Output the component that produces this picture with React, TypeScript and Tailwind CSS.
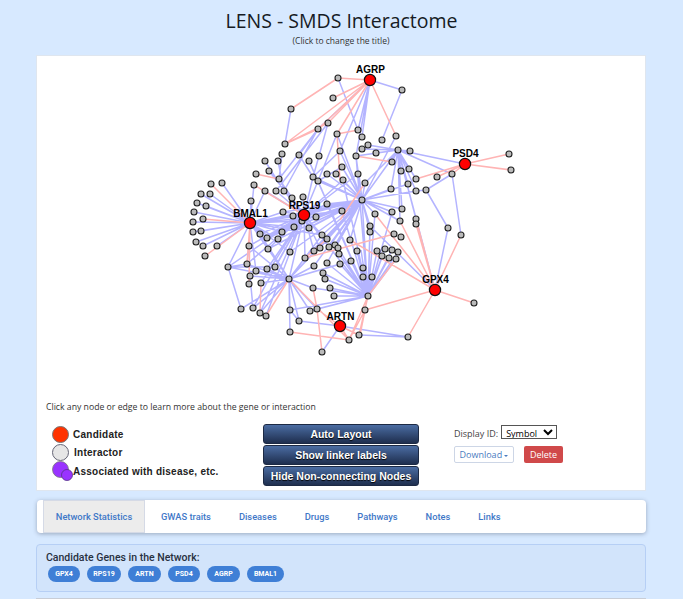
import React from 'react';

type P = [number, number];

const NODES: P[] = [
  [338,78],[333,98],[291,109],[318,129],[328,123],[337,134],[358,130],[285,144],[282,154],[340,151],[299,155],[319,156],[309,161],[356,156],
  [265,161],[278,161],[269,171],[342,167],[256,174],[327,174],[336,174],[358,174],[279,179],[313,177],[318,181],[343,180],[211,184],[222,183],
  [254,185],[201,194],[210,194],[265,191],[276,191],[284,191],[303,197],[292,198],[251,201],[197,203],[206,206],[327,204],[362,200],[194,212],
  [342,211],[283,212],[293,216],[316,217],[193,222],[203,219],[302,221],[402,90],[362,137],[396,136],[382,140],[368,145],[362,149],[398,150],
  [410,151],[376,153],[392,162],[509,154],[511,170],[401,171],[409,169],[437,177],[452,174],[416,179],[365,183],[408,184],[391,189],[416,191],
  [426,190],[392,212],[402,209],[375,214],[400,221],[416,219],[416,224],[193,232],[201,231],[196,242],[203,246],[217,246],[205,256],[260,234],
  [267,238],[282,232],[294,227],[309,228],[278,239],[322,235],[327,239],[350,240],[249,246],[268,249],[290,252],[314,251],[320,248],[329,247],
  [335,245],[338,248],[339,254],[357,251],[305,258],[247,264],[228,267],[267,269],[275,267],[256,271],[250,276],[314,266],[327,263],[340,264],
  [351,261],[323,273],[325,279],[249,284],[261,283],[289,279],[313,288],[330,288],[334,296],[241,309],[253,308],[260,313],[266,316],[290,310],
  [310,311],[317,309],[299,321],[290,332],[349,340],[359,335],[322,352],[370,226],[370,232],[394,234],[401,237],[448,228],[461,235],[377,251],
  [385,249],[392,250],[398,252],[382,256],[389,258],[396,259],[363,268],[363,277],[372,277],[368,296],[474,303],[365,310],[408,337],
];

const GENES: { label: string; at: P; ly: number }[] = [
  { label: 'AGRP', at: [370, 80], ly: 73 },
  { label: 'PSD4', at: [465, 164], ly: 157 },
  { label: 'RPS19', at: [304, 215], ly: 209 },
  { label: 'BMAL1', at: [250, 223], ly: 217 },
  { label: 'GPX4', at: [435, 290], ly: 283 },
  { label: 'ARTN', at: [340, 326], ly: 320 },
];

function fan(hub: P, targets: P[]) {
  return targets.map((t) => `M${hub[0]} ${hub[1]}L${t[0]} ${t[1]}`).join('');
}

const BMAL1: P = [250, 223];
const RPS19: P = [304, 215];
const AGRP: P = [370, 80];
const PSD4: P = [465, 164];
const GPX4: P = [435, 290];
const ARTN: P = [340, 326];

const BLUE = [
  fan([362,200], [[313,177],[318,181],[327,174],[336,174],[342,167],[343,180],[359,174],[356,156],[365,183],[391,189],[408,184],[416,191],[392,212],[402,209],[375,214],[400,221],[370,226],[370,232],[304,215],[250,223],[283,212],[293,216],[316,217],[302,221],[294,227],[309,228],[322,235],[327,239],[350,240],[329,247],[335,245],[305,258],[282,232],[267,238],[278,239],[314,251],[320,248],[289,279],[268,249],[290,252],[327,204],[342,211],[327,263],[314,266],[368,296],[398,150],[396,136],[337,134],[340,151]]),
  fan([398,150], [[356,156],[376,153],[392,162],[401,171],[409,169],[416,179],[408,184],[416,191],[391,189],[465,164],[400,221],[416,219],[365,183],[410,151],[402,209],[368,145],[362,149],[435,290]]),
  fan(AGRP, [[358,130],[402,90],[362,137],[318,129],[340,151],[356,156]]),
  fan([368,296], [[361,250],[370,232],[370,226],[363,268],[363,277],[372,277],[377,251],[385,249],[392,250],[398,252],[382,256],[389,258],[396,259],[351,261],[340,264],[330,288],[334,296],[327,263],[325,279],[323,273],[318,181],[309,161],[356,156],[338,248],[339,254],[357,251],[343,180],[327,204],[304,215],[375,214],[392,212],[342,211],[317,309],[310,311],[290,310],[313,288]]),
  fan([289,279], [[228,267],[267,269],[275,267],[256,271],[250,276],[261,283],[241,309],[253,308],[260,313],[290,310],[290,332],[310,311],[317,309],[299,321],[313,288],[305,258],[314,266],[247,264],[268,249],[304,215],[322,235],[260,234],[327,239],[249,246],[351,261],[340,264]]),
  fan(BMAL1, [[222,183],[201,194],[210,194],[197,203],[206,206],[194,212],[193,222],[193,232],[201,231],[196,242],[203,246],[217,246],[251,201],[254,185],[265,191],[304,215],[260,234],[267,238],[282,232],[294,227],[268,249],[228,267],[283,212],[293,216],[302,221],[316,217],[290,252],[278,239],[256,271],[322,235]]),
  fan(RPS19, [[303,197],[276,191],[265,191],[284,191],[292,198],[313,177],[318,181],[279,179],[269,171],[283,212],[293,216],[316,217],[302,221],[294,227],[309,228],[282,232],[322,235],[305,258],[314,251],[320,248],[290,252],[267,238],[260,234],[343,180],[327,204],[342,211],[358,174],[247,264],[228,267],[249,246],[268,249],[267,269],[275,267],[261,283],[253,308],[266,316],[260,313]]),
  'M291 109L285 144M338 78L358 130M318 129L279 179M328 123L319 156M328 123L276 191M318 129L299 155M318 129L284 191M402 90L382 140',
  'M452 174L426 190M426 190L448 228M452 174L461 235M448 228L435 290M408 337L360 335M299 321L340 326M340 326L322 352M340 326L408 337',
  'M228 267L241 309M228 267L247 264M228 267L275 267M398 150L452 174M370 226L435 290M416 191L426 190M290 310L299 321M249 246L247 264M253 308L250 276',
  'M265 161L284 191M278 161L284 191M282 154L279 179M299 155L313 177M319 156L313 177M337 134L318 181M340 151L313 177M309 161L318 181M342 167L318 181',
].join('');

const RED = [
  fan(AGRP, [[338,78],[333,98],[328,123],[337,134],[396,136],[318,129],[285,144]]),
  fan(PSD4, [[509,154],[511,170],[437,177],[416,179],[452,174]]),
  fan(GPX4, [[461,235],[416,219],[416,224],[400,221],[474,303],[408,337],[365,310],[350,240],[375,214]]),
  fan(BMAL1, [[211,184],[203,219],[205,256],[249,246],[247,264],[249,284]]),
  fan(ARTN, [[317,309],[349,340],[359,335]]),
  'M291 109L338 78M318 129L285 144M328 123L285 144M337 134L340 180M358 130L337 134M356 156L392 162M365 183L340 220',
  'M256 174L279 179M211 184L250 223M290 332L349 340M313 288L317 309M317 309L322 352M360 335L365 310M349 340L368 296M349 340L365 310M289 279L266 316M289 279L349 340M368 296L359 335M261 283L260 313',
  'M304 215L254 185M327 239L305 258M396 259L368 296M305 258L394 234',
].join('');

function Network() {
  return (
    <svg className="block w-[608px] h-[344px]" viewBox="37 56 608 344">
      <path d={BLUE} fill="none" stroke="#b4b4ff" strokeWidth="1.5" />
      <path d={RED} fill="none" stroke="#ffb4b4" strokeWidth="1.5" />
      {NODES.map(([x, y]) => (
        <circle key={`${x}-${y}`} cx={x} cy={y} r="3" fill="#bbbbbb" stroke="#222222" strokeWidth="1.1" />
      ))}
      {GENES.map((g) => (
        <g key={g.label}>
          <circle cx={g.at[0]} cy={g.at[1]} r="5.6" fill="#ff0000" stroke="#111111" strokeWidth="1.2" />
          <text
            x={g.at[0] + 0.5}
            y={g.ly}
            textAnchor="middle"
            fontSize="10"
            fontWeight="700"
            fill="#000000"
            fontFamily="'Liberation Sans', sans-serif"
          >
            {g.label}
          </text>
        </g>
      ))}
    </svg>
  );
}

function Legend() {
  return (
    <div className="w-[226px] mt-[1px] flex flex-col pl-[15px] font-['Liberation_Sans',sans-serif] font-bold text-[10px] text-[#222] tracking-[0.25px]">
      <div className="h-[18px] flex items-center gap-[4px]">
        <span className="w-[17px] h-[17px] rounded-full bg-[#ff3300] border border-[#777]" />
        <span>Candidate</span>
      </div>
      <div className="h-[18px] flex items-center gap-[5px]">
        <span className="w-[17px] h-[17px] rounded-full bg-[#e6e6e6] border border-[#667]" />
        <span>Interactor</span>
      </div>
      <div className="h-[20px] flex items-center gap-[4px]">
        <svg className="w-[21px] h-[21px] -mr-[4px] shrink-0" viewBox="0 0 21 21">
          <circle cx="8.5" cy="8.5" r="8" fill="#9933ff" stroke="#777" strokeWidth="0.8" />
          <circle cx="15" cy="14" r="5.5" fill="#9933ff" stroke="#553388" strokeWidth="0.8" />
        </svg>
        <span>Associated with disease, etc.</span>
      </div>
    </div>
  );
}

function LayoutButton({ children }: { children: React.ReactNode }) {
  return (
    <button className="w-[156px] h-[20px] rounded-[3px] border border-[#1d2a44] bg-gradient-to-b from-[#4b6da3] to-[#1f2f4f] text-white font-bold text-[10.5px] leading-none font-['Liberation_Sans',sans-serif] [text-shadow:0_1px_1px_#000]">
      {children}
    </button>
  );
}

const TABS = ['GWAS traits', 'Diseases', 'Drugs', 'Pathways', 'Notes', 'Links'];
const PILLS = [
  { name: 'GPX4', w: 'w-[32px]' },
  { name: 'RPS19', w: 'w-[34px]' },
  { name: 'ARTN', w: 'w-[33px]' },
  { name: 'PSD4', w: 'w-[32px]' },
  { name: 'AGRP', w: 'w-[33px]' },
  { name: 'BMAL1', w: 'w-[37px]' },
];

export default function App() {
  return (
    <div className="h-[599px] overflow-hidden bg-[#d7e9ff] font-['Open_Sans',sans-serif] text-[#222]">
      <div className="h-[55px] flex flex-col items-center">
        <h1 className="mt-[8px] h-[26px] text-[19.5px] leading-[26px] font-medium text-[#161b24]">LENS - SMDS Interactome</h1>
        <p className="mt-[1px] -ml-[1px] text-[8.5px] leading-[12px] text-[#333]">(Click to change the title)</p>
      </div>

      <div className="ml-[36px] w-[610px] h-[436px] bg-white border border-[#dfe6ef]">
        <Network />
        <p className="h-[14px] pl-[9px] text-[8.7px] leading-[14px] text-[#333]">
          Click any node or edge to learn more about the gene or interaction
        </p>
        <div className="mt-[10px] flex">
          <Legend />
          <div className="flex flex-col gap-[1px]">
            <LayoutButton>Auto Layout</LayoutButton>
            <LayoutButton>Show linker labels</LayoutButton>
            <LayoutButton>Hide Non-connecting Nodes</LayoutButton>
          </div>
          <div className="ml-[35px] mt-[1px] flex flex-col">
            <div className="h-[14px] flex items-start gap-[3px] text-[9px] text-[#444]">
              <span className="mt-[2px]">Display ID:</span>
              <select className="w-[56px] h-[14px] border border-[#555] bg-white text-[9px] leading-none text-black">
                <option>Symbol</option>
              </select>
            </div>
            <div className="mt-[7px] flex gap-[10px]">
              <button className="w-[60px] h-[17px] rounded-[2px] border border-[#cdd6e6] bg-white text-[9px] leading-none text-[#4a7cc0]">
                Download <span className="inline-block align-middle border-x-[2px] border-t-[2px] border-x-transparent border-t-[#4a7cc0]" />
              </button>
              <button className="w-[39px] h-[17px] rounded-[2px] bg-[#d0494a] text-[9px] leading-none text-white">Delete</button>
            </div>
          </div>
        </div>
      </div>

      <div className="mt-[9px] ml-[37px] w-[609px] h-[33px] flex pl-[6px] rounded-[4px] bg-white shadow-[0_1px_4px_rgba(80,90,110,0.45)] font-['Roboto',sans-serif] font-medium text-[9.3px] text-[#3f78c8]">
        <div className="w-[102px] flex items-center justify-center bg-[#ececec] border border-[#d5dae6]">Network Statistics</div>
        <div className="pl-[16px] flex items-center gap-[28px]">
          {TABS.map((t) => (
            <span key={t}>{t}</span>
          ))}
        </div>
      </div>

      <div className="mt-[11px] ml-[36px] w-[610px] h-[48px] rounded-[4px] border border-[#b6cff5] bg-[#d2e4fb] px-[9px] pt-[7px]">
        <div className="font-['Roboto',sans-serif] font-medium text-[10.5px] leading-[12px] text-[#27303f]">Candidate Genes in the Network:</div>
        <div className="mt-[2px] ml-[2px] flex gap-[7px]">
          {PILLS.map((p) => (
            <span
              key={p.name}
              className={`${p.w} h-[16px] rounded-full bg-[#3f7fd6] flex items-center justify-center text-[7px] font-bold text-white font-['Roboto',sans-serif]`}
            >
              {p.name}
            </span>
          ))}
        </div>
      </div>

      <div className="mt-[6px] ml-[36px] w-[610px] h-[20px] border-t border-[#c8cdd6] bg-[#eef1f5]" />
    </div>
  );
}
